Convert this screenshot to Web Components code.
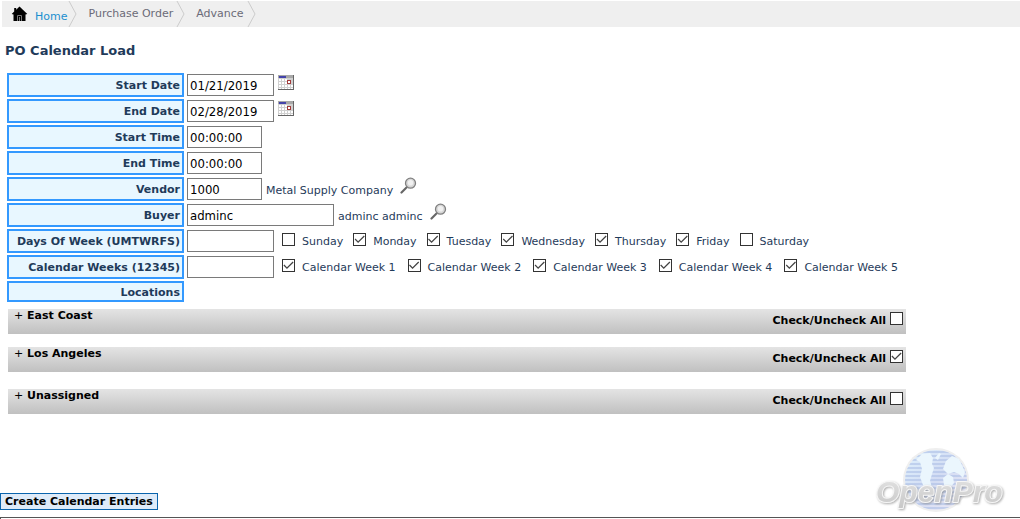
<!DOCTYPE html>
<html lang="en">
<head>
<meta charset="utf-8">
<title>PO Calendar Load</title>
<style>
    body {
        margin: 0;
        background: #fff;
        color: #1f3b5a;
        font: 11px/14px "DejaVu Sans", Verdana, sans-serif;
    }
</style>
</head>
<body>
<po-page>
    <crumb-bar slot="nav">
        <crumb-item home href="#home">Home</crumb-item>
        <crumb-item href="#po">Purchase Order</crumb-item>
        <crumb-item href="#advance">Advance</crumb-item>
    </crumb-bar>
    <span slot="title">PO Calendar Load</span>

    <field-row label="Start Date" value="01/21/2019" size="medium"><calendar-icon></calendar-icon></field-row>
    <field-row label="End Date" value="02/28/2019" size="medium"><calendar-icon></calendar-icon></field-row>
    <field-row label="Start Time" value="00:00:00"></field-row>
    <field-row label="End Time" value="00:00:00"></field-row>
    <field-row label="Vendor" value="1000"><look-up>Metal Supply Company</look-up></field-row>
    <field-row label="Buyer" value="adminc" size="large"><look-up>adminc adminc</look-up></field-row>
    <field-row label="Days Of Week (UMTWRFS)" size="medium">
        <check-list>
            <check-box>Sunday</check-box>
            <check-box checked>Monday</check-box>
            <check-box checked>Tuesday</check-box>
            <check-box checked>Wednesday</check-box>
            <check-box checked>Thursday</check-box>
            <check-box checked>Friday</check-box>
            <check-box>Saturday</check-box>
        </check-list>
    </field-row>
    <field-row label="Calendar Weeks (12345)" size="medium">
        <check-list wide>
            <check-box checked>Calendar Week 1</check-box>
            <check-box checked>Calendar Week 2</check-box>
            <check-box checked>Calendar Week 3</check-box>
            <check-box checked>Calendar Week 4</check-box>
            <check-box checked>Calendar Week 5</check-box>
        </check-list>
    </field-row>
    <field-row label="Locations" size="none"></field-row>

    <location-bar slot="locations">East Coast</location-bar>
    <location-bar slot="locations" checked>Los Angeles</location-bar>
    <location-bar slot="locations" last>Unassigned</location-bar>

    <action-button slot="action">Create Calendar Entries</action-button>
    <open-pro-logo slot="logo"></open-pro-logo>
</po-page>

<script>
const checkStyles = `
    input[type=checkbox] {
        appearance: none;
        box-sizing: border-box;
        flex: none;
        width: 13px;
        height: 13px;
        margin: 0;
        border: 1px solid #333;
        background: #fff;
    }
    input[type=checkbox]:checked::before {
        content: '';
        display: block;
        height: 11px;
        background: #444;
        clip-path: polygon(4% 50%, 12% 42%, 36% 66%, 88% 14%, 96% 22%, 36% 82%);
    }
`;

class BaseElement extends HTMLElement {
    constructor() {
        super();
        this.attachShadow({mode: 'open'});
    }
    connectedCallback() {
        this.shadowRoot.innerHTML = this.render();
    }
}

class PoPage extends BaseElement {
    render() {
        return `
            <style>
            :host {
                display: flex;
                flex-direction: column;
                box-sizing: border-box;
                min-height: 100vh;
                padding-top: 1px;
            }
            h1 {
                margin: 0;
                padding: 16px 5px 14px;
                font-size: 13px;
                line-height: 16px;
            }
            .fields {
                display: grid;
                gap: 2px;
                padding: 0 7px;
            }
            .locations {
                display: flex;
                flex-direction: column;
                box-sizing: border-box;
                max-width: 914px;
                padding: 7px 8px;
                gap: 13px;
            }
            footer {
                display: flex;
                justify-content: space-between;
                align-items: flex-end;
                margin-top: auto;
                padding: 0 13px 2px 0;
            }
            .frame {
                box-sizing: border-box;
                height: 2px;
                border-top: 1px solid #555;
                border-left: 1px solid #555;
            }
            </style>
            <slot name="nav"></slot>
            <main>
                <h1><slot name="title"></slot></h1>
                <div class="fields"><slot></slot></div>
                <div class="locations"><slot name="locations"></slot></div>
            </main>
            <footer><slot name="action"></slot><slot name="logo"></slot></footer>
            <div class="frame"></div>
        `;
    }
}

class CrumbBar extends BaseElement {
    render() {
        return `
            <style>
            :host {
                display: block;
                margin-left: 2px;
                background: #efefef;
            }
            nav {
                display: flex;
                height: 26px;
                padding-left: 9px;
            }
            </style>
            <nav><slot></slot></nav>
        `;
    }
}

class CrumbItem extends BaseElement {
    render() {
        const home = this.hasAttribute('home');
        return `
            <style>
            :host {
                display: flex;
                color: ${home ? '#1c8fd0' : '#6b6b78'};
            }
            a {
                display: flex;
                align-items: center;
                gap: 7px;
                padding: ${home ? '6px 1px 0 0' : '0 3px 1px 11px'};
                box-sizing: border-box;
                color: inherit;
                text-decoration: none;
            }
            .house {
                margin-bottom: 6px;
            }
            svg {
                display: block;
            }
            </style>
            <a href="${this.getAttribute('href')}">
                ${home ? `<svg class="house" width="17" height="16" viewBox="0 0 17 16">
                    <path d="M8.5 0.5 L16.3 8 L14.5 8.6 V15 H2.5 V8.6 L0.7 8 L3.2 5.6 V2 H5.2 V3.8 Z" fill="#000"/>
                    <path d="M6.5 15 V9.5 H10.5 V15 M8.5 11 V15" fill="none" stroke="#777"/>
                </svg>` : ''}
                <slot></slot>
            </a>
            <svg width="9" height="26" viewBox="0 0 9 26">
                <path d="M1 0 L8 13 L1 26" fill="none" stroke="#ccc"/>
            </svg>
        `;
    }
}

class FieldRow extends BaseElement {
    render() {
        const size = this.getAttribute('size') || 'small';
        const label = this.getAttribute('label');
        return `
            <style>
            :host {
                display: flex;
                align-items: center;
                gap: 3px;
            }
            .label {
                box-sizing: border-box;
                flex: none;
                width: 177px;
                padding: 4px 2px 2px;
                border: 2px solid #3399ff;
                background: #e8f7ff;
                font-weight: bold;
                text-align: right;
            }
            span.label {
                padding: 3px 2px 0;
            }
            input {
                box-sizing: border-box;
                flex: none;
                height: 22px;
                margin: 0;
                padding: 1px 2px;
                border: 1px solid #7a7a7a;
                border-radius: 0;
                background: #fff;
                color: #000;
                font: 13px "DejaVu Sans Condensed", Tahoma, "DejaVu Sans", sans-serif;
            }
            label.label {
                min-height: 24px;
            }
            .small { width: 75px; }
            .medium { width: 87px; }
            .large { width: 147px; }
            </style>
            ${size === 'none' ? `<span class="label">${label}</span>` : `
                <label class="label" for="field">${label}</label>
                <input id="field" class="${size}" type="text" value="${this.getAttribute('value') || ''}">
            `}
            <slot></slot>
        `;
    }
}

class CalendarIcon extends BaseElement {
    render() {
        return `
            <style>
            :host {
                display: block;
                padding: 0 1px 6px;
            }
            button {
                display: block;
                padding: 0;
                border: 0;
                background: none;
            }
            svg {
                display: block;
            }
            </style>
            <button type="button" aria-label="Pick a date">
                <svg width="16" height="15" viewBox="0 0 16 15" shape-rendering="crispEdges">
                    <rect width="16" height="15" fill="#d0d0d0"/>
                    <path d="M1 4h2v2h-2z M4 4h2v2h-2z M7 4h2v2h-2z M1 7h2v2h-2z M4 7h2v2h-2z M7 7h2v2h-2z M1 10h2v2h-2z M4 10h2v2h-2z M7 10h2v2h-2z M10 10h2v2h-2z M13 10h2v2h-2z M1 13h2v1h-2z M4 13h2v1h-2z M7 13h2v1h-2z M10 13h2v1h-2z M13 13h2v1h-2z" fill="#fff"/>
                    <rect width="16" height="3" fill="#a8a8a8"/>
                    <rect x="1" y="1" width="7" height="2" fill="#4444aa"/>
                    <path d="M9 5h4v4h-4z" fill="#a33b3b"/>
                    <path d="M10 6h2v2h-2z" fill="#fff"/>
                    <path d="M15 0h1v15h-16v-1h15z" fill="#666"/>
                </svg>
            </button>
        `;
    }
}

class LookUp extends BaseElement {
    render() {
        return `
            <style>
            :host {
                display: flex;
                align-items: center;
                gap: 7px;
                padding-left: 1px;
            }
            span {
                padding-top: 3px;
            }
            button {
                padding: 0 0 7px;
                border: 0;
                background: none;
            }
            svg {
                display: block;
            }
            </style>
            <span><slot></slot></span>
            <button type="button" aria-label="Look up">
                <svg width="17" height="17" viewBox="0 0 17 17">
                    <path d="M1.5 15.5 L6.5 10.5" stroke="#666" stroke-width="2.2" stroke-linecap="round"/>
                    <circle cx="10.5" cy="6.2" r="5" fill="#d6d6d6" stroke="#808080" stroke-width="1.3"/>
                    <circle cx="10.5" cy="5.8" r="2.8" fill="#f0f0f0"/>
                </svg>
            </button>
        `;
    }
}

class CheckList extends BaseElement {
    render() {
        return `
            <style>
            :host {
                display: flex;
                gap: 10px;
                padding-left: 5px;
            }
            :host([wide]) {
                gap: 12px;
            }
            </style>
            <slot></slot>
        `;
    }
}

class CheckBox extends BaseElement {
    render() {
        return `
            <style>
            :host {
                display: block;
                white-space: nowrap;
            }
            label {
                display: flex;
                align-items: flex-start;
                gap: 7px;
            }
            span {
                padding-top: 2px;
            }
            ${checkStyles}
            </style>
            <label><input type="checkbox" ${this.hasAttribute('checked') ? 'checked' : ''}><span><slot></slot></span></label>
        `;
    }
}

class LocationBar extends BaseElement {
    render() {
        return `
            <style>
            :host {
                display: flex;
                justify-content: space-between;
                align-items: flex-start;
                box-sizing: border-box;
                height: 25px;
                padding: 0 3px 0 6px;
                background: linear-gradient(#e4e4e4, #c0c0c0);
                color: #000;
                font-weight: bold;
            }
            :host([last]) {
                margin-top: 4px;
            }
            button {
                padding: 0;
                border: 0;
                background: none;
                color: inherit;
                font: inherit;
            }
            i {
                font-style: normal;
                font-weight: normal;
            }
            label {
                display: flex;
                gap: 4px;
                padding-top: 3px;
            }
            span {
                padding-top: 2px;
            }
            ${checkStyles}
            </style>
            <button type="button"><i>+</i> <slot></slot></button>
            <label><span>Check/Uncheck All</span><input type="checkbox" ${this.hasAttribute('checked') ? 'checked' : ''}></label>
        `;
    }
}

class ActionButton extends BaseElement {
    render() {
        return `
            <style>
            :host {
                display: block;
                padding-bottom: 5px;
            }
            button {
                display: block;
                padding: 1px 4px 0;
                border: 1px solid #0a64ad;
                background: #deebf9;
                color: #000;
                font: inherit;
                font-weight: bold;
            }
            </style>
            <button type="button"><slot></slot></button>
        `;
    }
}

class OpenProLogo extends BaseElement {
    render() {
        return `
            <style>
            :host {
                display: block;
            }
            svg {
                display: block;
            }
            text {
                font: italic bold 30px "Liberation Sans", Arial, sans-serif;
            }
            </style>
            <svg width="132" height="68" viewBox="0 0 132 68" role="img" aria-label="OpenPro">
                <defs>
                    <linearGradient id="sea" x1="0" y1="0" x2="1" y2="1">
                        <stop offset="0" stop-color="#dff2fd"/>
                        <stop offset=".5" stop-color="#d3dcf3"/>
                        <stop offset="1" stop-color="#efeaf5"/>
                    </linearGradient>
                    <linearGradient id="steel" x1="0" y1="0" x2="0" y2="1">
                        <stop offset="0" stop-color="#e4e4e4"/>
                        <stop offset="1" stop-color="#c8c8c8"/>
                    </linearGradient>
                    <pattern id="lines" width="4" height="4" patternUnits="userSpaceOnUse">
                        <rect width="4" height="2" fill="#aebfe6" opacity=".6"/>
                    </pattern>
                    <filter id="shade" x="-10%" y="-20%" width="120%" height="150%">
                        <feDropShadow dx="1" dy="1" stdDeviation="1" flood-color="#888" flood-opacity=".7"/>
                    </filter>
                </defs>
                <ellipse cx="61" cy="33" rx="33" ry="32" fill="#efefef"/>
                <ellipse cx="61" cy="33" rx="31" ry="30" fill="url(#sea)"/>
                <ellipse cx="61" cy="33" rx="31" ry="30" fill="url(#lines)"/>
                <path d="M41 13 L47 7 L55 6 L58 11 L57 17 L59 21 L57 27 L55 34 L57 40 L53 44 L48 38 L45 30 L47 22 L45 15 Z M60 11 L64 6 L66 7 L63 13 Z M68 22 L71 14 L77 9 L84 12 L87 18 L90 25 L88 31 L84 27 L79 25 L73 27 Z M68 31 L73 27 L78 30 L79 36 L75 41 L69 38 Z" fill="#ebf6fd"/>
                <g filter="url(#shade)">
                    <text x="1" y="55" fill="url(#steel)" stroke="#f6f6f6" stroke-width="2" stroke-linejoin="round" paint-order="stroke">OpenPro</text>
                </g>
            </svg>
        `;
    }
}

customElements.define('po-page', PoPage);
customElements.define('crumb-bar', CrumbBar);
customElements.define('crumb-item', CrumbItem);
customElements.define('field-row', FieldRow);
customElements.define('calendar-icon', CalendarIcon);
customElements.define('look-up', LookUp);
customElements.define('check-list', CheckList);
customElements.define('check-box', CheckBox);
customElements.define('location-bar', LocationBar);
customElements.define('action-button', ActionButton);
customElements.define('open-pro-logo', OpenProLogo);
</script>
</body>
</html>
